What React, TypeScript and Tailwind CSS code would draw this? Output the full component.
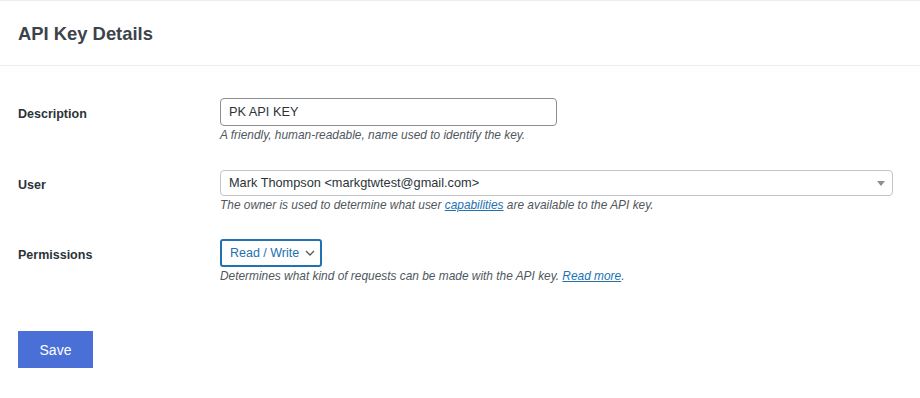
import React from "react";

export default function App() {
  return (
    <div className="w-[920px] h-[398px] bg-white text-[#1d2327]" style={{ fontFamily: "'Liberation Sans', Arial, sans-serif" }}>
      <div className="h-[66px] border-t border-b border-[#ececec] flex items-center pl-[18px] pt-[1px]">
        <h1 className="text-[18.4px] font-bold text-[#3c434a]">API Key Details</h1>
      </div>
      <div className="pl-[18px]">
        {/* Description */}
        <div className="flex mt-[32px]">
          <div className="w-[202px] h-[28px] mt-[2px] flex items-center text-[12.5px] font-bold text-[#2c3338]">Description</div>
          <div>
            <div className="w-[337px] h-[28px] border border-[#8c8f94] rounded-[4px] flex items-center px-[8px] text-[12.75px] text-[#2c3338]">PK API KEY</div>
            <p className="text-[11.9px] italic text-[#50575e] leading-[18px]">A friendly, human-readable, name used to identify the key.</p>
          </div>
        </div>
        {/* User */}
        <div className="flex mt-[26px]">
          <div className="w-[202px] h-[26px] mt-[2px] flex items-center text-[12.5px] font-bold text-[#2c3338]">User</div>
          <div>
            <div className="w-[673px] h-[26px] border border-[#c3c4c7] rounded-[4px] flex items-center justify-between pl-[8px] pr-[7px] text-[12.75px] text-[#2c3338]">
              <span>Mark Thompson &lt;markgtwtest@gmail.com&gt;</span>
              <svg width="8" height="5" viewBox="0 0 8 5"><path d="M0 0 L8 0 L4 5 Z" fill="#8c8f94" /></svg>
            </div>
            <p className="text-[11.9px] italic text-[#50575e] leading-[18px]">
              The owner is used to determine what user <a className="text-[#2271b1] underline">capabilities</a> are available to the API key.
            </p>
          </div>
        </div>
        {/* Permissions */}
        <div className="flex mt-[25px]">
          <div className="w-[202px] h-[28px] mt-[2px] flex items-center text-[12.5px] font-bold text-[#2c3338]">Permissions</div>
          <div>
            <div className="w-[102px] h-[28px] border-2 border-[#2271b1] rounded-[3px] flex items-center gap-[6px] pl-[8px] text-[12.5px] text-[#2271b1]">
              <span>Read / Write</span>
              <svg width="10" height="6" viewBox="0 0 10 6" fill="none"><path d="M1 1 L5 5 L9 1" stroke="#50575e" strokeWidth="1.3" /></svg>
            </div>
            <p className="text-[11.9px] italic text-[#50575e] leading-[18px]">
              Determines what kind of requests can be made with the API key. <a className="text-[#2271b1] underline">Read more</a>.
            </p>
          </div>
        </div>
        <button className="mt-[46px] w-[75px] h-[37px] bg-[#4a6fd7] text-white text-[14px] flex items-center justify-center pt-[1px]">Save</button>
      </div>
    </div>
  );
}
